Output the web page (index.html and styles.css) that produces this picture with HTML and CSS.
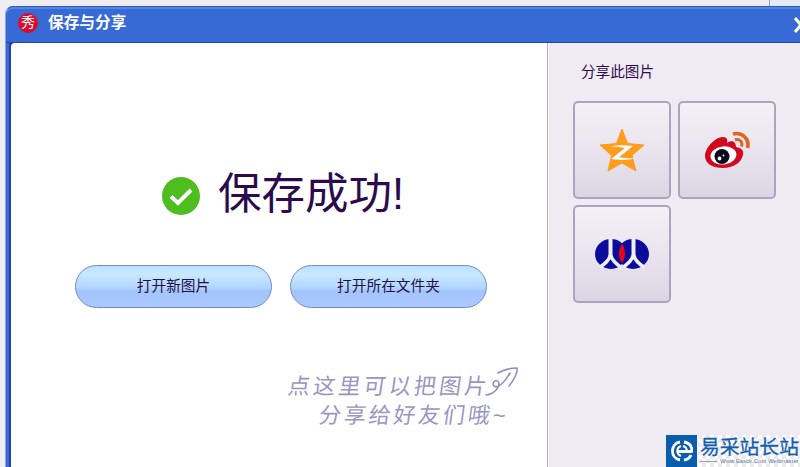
FILE: index.html
```html
<!DOCTYPE html>
<html lang="zh-CN">

<head>
    <meta charset="UTF-8">
    <title>保存与分享</title>
    <link rel="stylesheet" href="styles.css">
</head>

<body>
    <div class="back-window"></div>
    <div class="window">
        <div class="title-bar">
            <div class="app-icon">秀</div>
            <h1>保存与分享</h1>
            <svg class="close" width="16" height="18" viewBox="0 0 16 18">
                <path d="M2 2 L14 16 M14 2 L2 16" />
            </svg>
        </div>
        <div class="content">
            <div class="main">
                <div class="result">
                    <svg width="38" height="38" viewBox="0 0 38 38">
                        <circle cx="19" cy="19" r="19" fill="#4dbd20" />
                        <path d="M9 19.5 L16 26 L29 13" fill="none" stroke="#fff" stroke-width="4" />
                    </svg>
                    <h2>保存成功!</h2>
                </div>
                <div class="buttons">
                    <button>打开新图片</button>
                    <button>打开所在文件夹</button>
                </div>
                <div class="hint">
                    <div class="hint-line">
                        <span>点这里可以把图片</span>
                        <svg width="35" height="38" viewBox="0 0 35 38">
                            <path d="M1 34 C7 34 14 28 14 22 C12 17 6 21 9 25 C13 28 20 21 25 12 M13 12 C18 9 25 7 32 7 C33 11 29 19 24 25" />
                        </svg>
                    </div>
                    <div class="hint-line second">
                        <span>分享给好友们哦~</span>
                    </div>
                </div>
            </div>
            <div class="share">
                <h3>分享此图片</h3>
                <div class="share-list">
                    <a class="share-item" href="#">
                        <svg width="46" height="44" viewBox="0 0 46 44">
                            <path fill="#ff9c1c" stroke="#ff9c1c" stroke-width="1" stroke-linejoin="round" d="M23 1 L28.500 15.500 L45 17 L33 27.500 L37 43 L23 35 L9 43 L12.500 27.500 L1 17 L17.500 15.500 Z" />
                            <path fill="#fff" d="M11 18.300 C18 16.800 27 16.800 34 18 L20 29.200 C26 30.300 32 30.500 38 30 C29 32.300 19 32.300 12 31 L26 20 C21 19 16 18.500 11 18.300 Z" />
                        </svg>
                    </a>
                    <a class="share-item" href="#">
                        <svg width="46" height="38" viewBox="0 0 46 38">
                            <path fill="#d2091e" d="M1 25 C1 17 11 6 19 6 C23 6 24 9 23 12 C27 9 32 10 32 16 C38 17 40 20 39 24 C37 32 29 37 19 37 C9 37 1 33 1 25 Z" />
                            <ellipse cx="19.500" cy="24.500" rx="13" ry="9" fill="#fff" transform="rotate(-7 19 25)" />
                            <circle cx="18" cy="25.500" r="7.500" fill="#080a20" />
                            <circle cx="15.500" cy="27.500" r="1.900" fill="#fff" />
                            <circle cx="19.500" cy="24.500" r="0.900" fill="#fff" />
                            <path fill="none" stroke="#e06420" stroke-width="3.600" d="M29 3 C38 .500 46 8 43.500 17" />
                            <path fill="none" stroke="#e06420" stroke-width="3" d="M31 8.700 C36 7.500 39 11 37.500 15.500" />
                        </svg>
                    </a>
                    <a class="share-item" href="#">
                        <svg width="54" height="32" viewBox="0 0 54 32">
                            <ellipse cx="16" cy="16" rx="16" ry="15" fill="#0b0b9c" />
                            <ellipse cx="38" cy="16" rx="16" ry="15" fill="#0b0b9c" />
                            <path fill="none" stroke="#f1eef4" stroke-width="4" d="M15.500 0 V20 M38.500 0 V20" />
                            <path fill="none" stroke="#f1eef4" stroke-width="3.600" d="M15.500 17 C14 22 10 26 5 29 M15.500 17 C17 22 21 26 27 30 M38.500 17 C37 22 33 26 27 30 M38.500 17 C40 22 44 26 49 29" />
                            <path fill="#ebe7ef" d="M20 32 L27 26 L34 32 Z" />
                            <path fill="#e3061c" d="M27 6 C31 11 31 20 27 25 C23 20 23 11 27 6 Z" />
                        </svg>
                    </a>
                </div>
            </div>
        </div>
    </div>
    <div class="watermark">
        <svg width="31" height="32" viewBox="0 0 31 32">
            <rect width="31" height="32" fill="#0a5cad" />
            <path fill="none" stroke="#fff" stroke-width="2.800" d="M14 7 C4 8.500 4 23.500 14 25 M18 7 C24 8 26.500 12 25.500 16.500 H11 M18 25 C21.500 24.500 24 22.500 25 20" />
            <path fill="none" stroke="#fff" stroke-width="2" d="M15 11 C10 13 10 19 15 21 M17 11 C20 12 21 14 20.500 16" />
        </svg>
        <div class="watermark-text">
            <div class="watermark-name">易采站长站</div>
            <div class="watermark-url">Www.Easck.Com Webmaster</div>
        </div>
    </div>
</body>

</html>
```
FILE: styles.css
```css
* {
    box-sizing: border-box;
}

body {
    margin: 0;
    width: 800px;
    height: 467px;
    padding: 6px 0 0 5px;
    overflow: hidden;
    position: relative;
    background-color: #f0edf2;
    font-family: "Liberation Sans", "Noto Sans CJK SC", sans-serif;
    color: #2c0b4d;
}

h1,
h2,
h3 {
    margin: 0;
}

/* Corner of the window behind the dialog */
.back-window {
    position: absolute;
    top: 0;
    right: 0;
    width: 31px;
    height: 6px;
    background-color: #e3e9f8;
    border-left: 1px solid #8b9bc8;
}

.window {
    height: 461px;
    display: flex;
    flex-direction: column;
    background-color: #376ad5;
    border-top: 1px solid #3156ad;
    border-left: 1px solid #8fa4df;
    border-radius: 8px 0 0 0;
    box-shadow: inset 0 2px 0 #5288e5;
}

.title-bar {
    height: 36px;
    flex: none;
    display: flex;
    align-items: center;
    padding: 0 0 3px 12px;
    border-bottom: 1px solid #2448aa;
    overflow: hidden;
}

.app-icon {
    width: 20px;
    height: 20px;
    flex: none;
    border-radius: 50%;
    background-color: #dc0b2b;
    color: #fff;
    font-size: 14px;
    line-height: 19px;
    text-align: center;
}

.title-bar h1 {
    margin-left: 10px;
    font-size: 15.700px;
    line-height: 20px;
    color: #fff;
    white-space: nowrap;
}

.close {
    flex: none;
    margin: 3px 0 0 667px;
}

.close path {
    fill: none;
    stroke: #fff;
    stroke-width: 3;
}

.content {
    flex: 1;
    display: flex;
    margin-left: 3px;
    border-left: 2px solid #2142a6;
    background-color: #2142a6;
}

.main {
    width: 537px;
    flex: none;
    padding-top: 121px;
    background-color: #fff;
    border-right: 1px solid #b4adbb;
    border-radius: 4px 0 0 0;
}

.result {
    height: 60px;
    display: flex;
    align-items: center;
    padding: 0 0 0 151px;
}

.result svg {
    margin-top: 4px;
}

.result h2 {
    margin-left: 18px;
    font-size: 43.500px;
    line-height: 60px;
    font-weight: normal;
    white-space: nowrap;
}

.buttons {
    display: flex;
    gap: 18px;
    padding: 41px 0 0 64px;
}

.buttons button {
    width: 197px;
    height: 43px;
    padding: 0 0 4px;
    border: 1px solid #7487c9;
    border-radius: 22px;
    background: linear-gradient(#b8e1ff, #c8e9ff 20%, #b1d4ff 55%, #a4c4ff 60%, #aac9ff);
    font-family: inherit;
    font-size: 14.700px;
    color: #241047;
}

.hint {
    padding: 58px 0 0 278px;
    font-size: 22px;
    letter-spacing: 3.200px;
    color: #9996c2;
}

.hint-line {
    display: flex;
    height: 29px;
    line-height: 30px;
    white-space: nowrap;
}

.hint-line span {
    transform: skewX(-8deg);
    padding-top: 6px;
}

.hint-line svg {
    flex: none;
    margin: -5px 0 0 -6px;
}

.hint-line path {
    fill: none;
    stroke: #9390be;
    stroke-width: 1.600;
    stroke-linecap: round;
}

.second {
    padding-left: 31px;
    letter-spacing: 2.800px;
}

.share {
    flex: 1;
    padding: 19px 0 0 24px;
    background-color: #f0ebf2;
    border-left: 1px solid #faf8fb;
}

.share h3 {
    padding-left: 8px;
    font-size: 14.600px;
    line-height: 20px;
    font-weight: normal;
}

.share-list {
    display: grid;
    grid-template-columns: 99px 99px;
    grid-auto-rows: 98px;
    gap: 6px;
    margin-top: 19px;
}

.share-item {
    display: flex;
    align-items: center;
    justify-content: center;
    width: 98px;
    border: 2px solid #aaa4bf;
    border-radius: 5px;
    background: linear-gradient(#f4f0f6, #e9e4ee 50%, #dcd6e3);
}

/* Site logo in the corner, over the dialog */
.watermark {
    position: absolute;
    left: 666px;
    top: 435px;
    width: 134px;
    height: 32px;
    display: flex;
    background: repeating-conic-gradient(#fff 0 25%, #eceaee 0 50%) 0 0 / 8px 8px;
}

.watermark svg {
    flex: none;
}

.watermark-text {
    padding-left: 3px;
    white-space: nowrap;
}

.watermark-name {
    height: 23px;
    font-size: 19.800px;
    line-height: 25px;
    color: #1260ad;
    -webkit-text-stroke: 0.3px #1260ad;
}

.watermark-url {
    display: flex;
    align-items: center;
    font-size: 6px;
    line-height: 7px;
    color: #657f9e;
}

.watermark-url::before {
    content: "";
    width: 17px;
    height: 1px;
    margin-right: 3px;
    background-color: #8fa0b8;
}
```
